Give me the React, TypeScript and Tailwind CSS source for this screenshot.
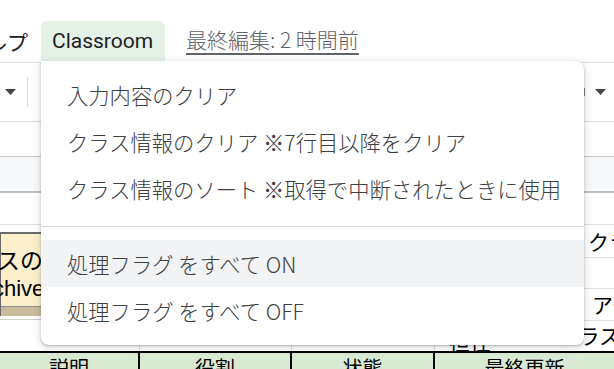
import React from "react";

const menuItems = [
  { label: "入力内容のクリア" },
  { label: "クラス情報のクリア ※7行目以降をクリア" },
  { label: "クラス情報のソート ※取得で中断されたときに使用" },
];

const flagItems = [
  { label: "処理フラグ をすべて ON", active: true },
  { label: "処理フラグ をすべて OFF", active: false },
];

const cols = [
  { w: "w-[140px]", title: "説明" },
  { w: "w-[152px]", title: "役割" },
  { w: "w-[143px]", title: "状態" },
  { w: "flex-1", title: "最終更新" },
];

function Caret() {
  return (
    <svg width="11" height="6" viewBox="0 0 11 6">
      <polygon points="0,0 11,0 5.5,6" fill="#444746" />
    </svg>
  );
}

function ClassroomMenu() {
  return (
    <div className="absolute left-[41px] top-[61px] w-[543px] h-[284px] bg-white rounded-b-lg rounded-tr-lg shadow-[0_2px_6px_2px_rgba(60,64,67,0.15),0_1px_2px_rgba(60,64,67,0.3)] py-[10px] text-[21.3px] font-light text-[#3c4043]">
      {menuItems.map((item) => (
        <div key={item.label} className="h-[47px] flex items-center pl-[26px] whitespace-nowrap">
          {item.label}
        </div>
      ))}
      <div className="h-[28px] flex items-center">
        <div className="w-full h-px bg-[#dadce0]" />
      </div>
      {flagItems.map((item) => (
        <div
          key={item.label}
          className={
            item.active
              ? "h-[47px] flex items-center pl-[26px] whitespace-nowrap bg-[#f1f3f4]"
              : "h-[47px] flex items-center pl-[26px] whitespace-nowrap"
          }
        >
          {item.label}
        </div>
      ))}
    </div>
  );
}

export default function App() {
  return (
    <div className="relative w-[614px] h-[369px] overflow-hidden bg-white font-['Noto_Sans_CJK_JP','Noto_Sans',sans-serif] leading-none">
      {/* menu bar */}
      <div className="h-[63px] border-b border-[#dadce0] flex items-end">
        <div className="flex items-end h-[41px]">
          <span className="ml-[-35px] self-center text-[21px] text-[#202124] whitespace-nowrap">ヘルプ</span>
          <div className="ml-[13px] w-[124px] h-full bg-[#e4f2e8] rounded-t-md flex items-center pl-[11px] pb-[1px] font-['Roboto',sans-serif] text-[21px] text-[#202124]">
            Classroom
          </div>
          <span className="ml-[21px] self-center mb-[4px] text-[21px] font-light text-[#5f6368] underline underline-offset-[5px] decoration-[1.5px] whitespace-nowrap">
            最終編集: 2 時間前
          </span>
        </div>
      </div>

      {/* toolbar */}
      <div className="h-[59px] border-b border-[#dadce0] flex items-center justify-between">
        <div className="flex items-center">
          <div className="ml-[5px]"><Caret /></div>
          <div className="ml-[11px] w-px h-[30px] bg-[#dadce0]" />
        </div>
        <div className="flex items-center mr-[8px]">
          <div className="w-[2px] h-[8px] bg-[#777] mr-[10px]" />
          <Caret />
        </div>
      </div>

      {/* formula bar */}
      <div className="h-[35px] border-b border-[#c7c7c7]" />

      {/* column headers */}
      <div className="h-[36px] bg-[#f8f9fa] border-b-2 border-[#c0c0c0]" />

      {/* grid rows */}
      <div className="h-[128px] flex justify-between">
        <div className="w-[50px] flex flex-col">
          <div className="h-[32px] border-b border-[#e2e3e3]" />
          <div className="mt-[7px] h-[84px] bg-[#fcf0cc] border-t-2 border-l border-[#6b6b6b] flex flex-col">
            <div className="h-[35px] pt-[14px] text-[23px] text-black whitespace-nowrap ml-[-4px]">スの</div>
            <div className="h-[28px] pt-[9px] font-['Liberation_Sans',sans-serif] text-[22px] text-black whitespace-nowrap ml-[-8px]">chive</div>
            <div className="mt-auto h-[10px] bg-[#c9bb9c] border-t border-[#8c8c8c]" />
          </div>
          <div className="mt-[3px] border-b border-[#cfcfcf]" />
        </div>
        <div className="w-[30px] flex flex-col text-[21px] text-black">
          <div className="h-[32px] border-b border-[#e2e3e3]" />
          <div className="h-[33px] border-b border-[#e2e3e3] flex items-center pl-[4px] whitespace-nowrap">クラ</div>
          <div className="h-[31px] border-b border-[#e2e3e3]" />
          <div className="h-[32px] border-b border-[#e2e3e3] flex items-center pl-[8px] whitespace-nowrap">アー</div>
        </div>
      </div>

      {/* row above header */}
      <div className="h-[30px] flex">
        {cols.map((c, i) => (
          <div
            key={c.title}
            className={
              i < 3
                ? c.w + " border-r border-[#e2e3e3] h-full"
                : c.w + " h-full flex items-start pl-[14px] pt-[10px] text-[21px] text-black whitespace-nowrap"
            }
          >
            {i === 3 && (
              <>
                <span>担任</span>
                <span className="ml-auto mr-[-6px] mt-[-6px]">フラス</span>
              </>
            )}
          </div>
        ))}
      </div>

      {/* green header row */}
      <div className="h-[18px] border-t-2 border-black bg-[#d9ead3] flex">
        {cols.map((c, i) => (
          <div
            key={c.title}
            className={
              i < 3
                ? c.w + " border-r-2 border-black flex justify-center pt-[5px] text-[20px] text-black"
                : c.w + " flex justify-center pt-[5px] text-[20px] text-black"
            }
          >
            {c.title}
          </div>
        ))}
      </div>

      <ClassroomMenu />
    </div>
  );
}
